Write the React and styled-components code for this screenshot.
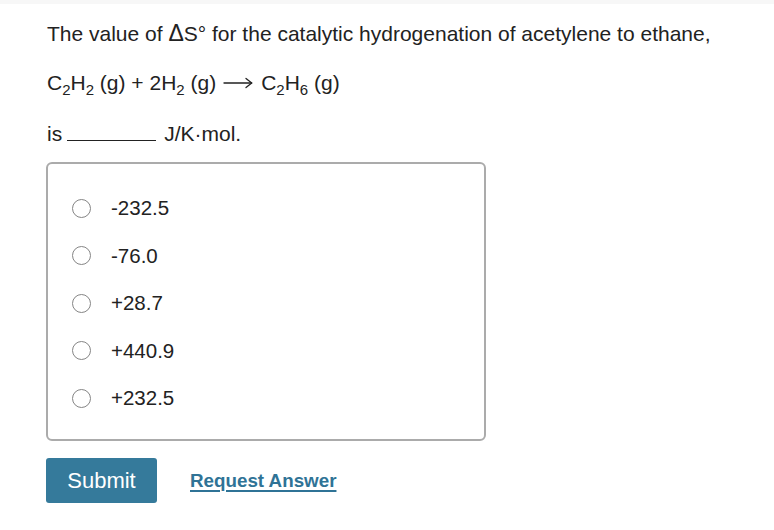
import React from "react";
import styled, { createGlobalStyle } from "styled-components";

const Global = createGlobalStyle`
  html, body { margin: 0; padding: 0; background: #fff; }
  body { font-family: "Liberation Sans", Arial, Helvetica, sans-serif; color: #222; }
`;

const TopStrip = styled.div`
  height: 4px;
  background: #f7f7f7;
`;

const Page = styled.div`
  padding: 17px 0 0 47px;
  width: 720px;
`;

const Para = styled.p`
  margin: 0 0 ${(p) => p.$mb || 0}px;
  font-size: 21px;
  line-height: 24px;
  height: 24px;
  color: #222;
  white-space: nowrap;
`;

const Sub = styled.sub`
  font-size: 15px;
  vertical-align: -5px;
  line-height: 0;
`;

const Delta = styled.span`
  font-size: 23px;
`;

const ArrowSvg = styled.svg`
  display: inline-block;
  width: 30px;
  height: 12px;
  margin: 0 8px 0 7px;
  vertical-align: 1px;
`;

const Arrow = () => (
  <ArrowSvg viewBox="0 0 30 12" fill="none" stroke="#222" strokeWidth="1.3" strokeLinecap="round">
    <path d="M1 6H28.5" />
    <path d="M23 1.5L28.7 6L23 10.5" />
  </ArrowSvg>
);

const Blank = styled.span`
  display: inline-block;
  width: 89px;
  border-bottom: 1px solid #222;
  margin: 0 8px 0 5px;
  vertical-align: baseline;
  height: 1px;
`;

const Box = styled.div`
  box-sizing: border-box;
  width: 440px;
  margin-left: -1px;
  margin-top: 16px;
  border: 2px solid #ababab;
  border-radius: 6px;
  padding: 32px 0 29px 24px;
  display: flex;
  flex-direction: column;
  gap: 23.5px;
`;

const Option = styled.label`
  display: flex;
  align-items: center;
  gap: 20px;
  font-size: 20.5px;
  line-height: 24px;
  color: #222;
`;

const Radio = styled.span`
  box-sizing: border-box;
  width: 19px;
  height: 19px;
  border-radius: 50%;
  border: 1.5px solid #858585;
  background: #fff;
  flex: none;
`;

const Actions = styled.div`
  display: flex;
  align-items: center;
  gap: 33px;
  margin-top: 17px;
  margin-left: -1px;
`;

const Submit = styled.button`
  width: 111px;
  height: 45px;
  border: none;
  border-radius: 3px;
  background: #357a9b;
  color: #fff;
  font-family: "Liberation Sans", Arial, sans-serif;
  font-size: 22px;
  padding: 0;
`;

const Link = styled.a`
  font-size: 18.8px;
  font-weight: bold;
  color: #2f7396;
  text-decoration: underline;
  text-underline-offset: 3px;
  text-decoration-thickness: 2px;
`;

const options = ["-232.5", "-76.0", "+28.7", "+440.9", "+232.5"];

export default function App() {
  return (
    <>
      <Global />
      <TopStrip />
      <Page>
        <Para $mb={26}>
          The value of <Delta>Δ</Delta>S° for the catalytic hydrogenation of acetylene to ethane,
        </Para>
        <Para $mb={27}>
          C<Sub>2</Sub>H<Sub>2</Sub> (g) + 2H<Sub>2</Sub> (g)
          <Arrow />
          C<Sub>2</Sub>H<Sub>6</Sub> (g)
        </Para>
        <Para>
          is<Blank />J/K·mol.
        </Para>
        <Box>
          {options.map((o) => (
            <Option key={o}>
              <Radio />
              {o}
            </Option>
          ))}
        </Box>
        <Actions>
          <Submit>Submit</Submit>
          <Link href="#">Request Answer</Link>
        </Actions>
      </Page>
    </>
  );
}
